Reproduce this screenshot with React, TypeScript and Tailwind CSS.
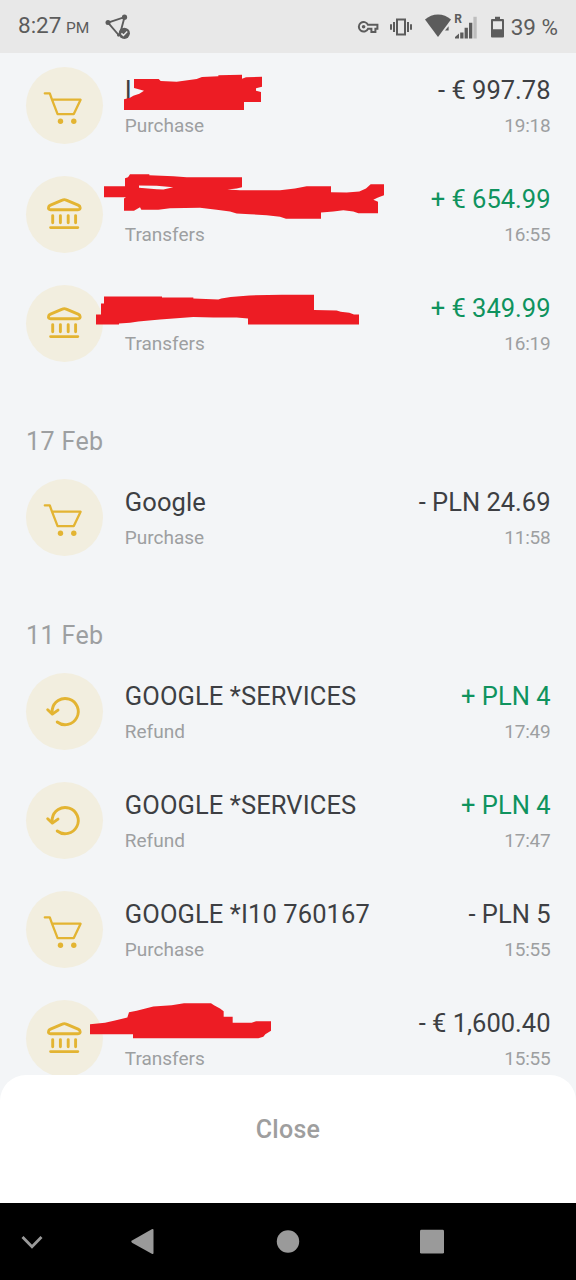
import React from 'react';

type IconKind = 'cart' | 'bank' | 'refund';

interface Transaction {
  icon: IconKind;
  title: string;
  type: string;
  amount: string;
  time: string;
  income?: boolean;
  mask?: { viewBox: string; d: string };
}

interface Group {
  date?: string;
  items: Transaction[];
}

const groups: Group[] = [
  {
    items: [
      {
        icon: 'cart',
        title: 'I',
        type: 'Purchase',
        amount: '- € 997.78',
        time: '19:18',
        mask: {
          viewBox: '0 39 1728 231',
          d: 'M402 75H476L482 81L530 83L590 75L606 69L655 67V64L726 62V74L738 70L786 68V98L768 103V110L783 114V144H732V168H372V136L390 131L400 125L418 119L432 110L416 106L402 102Z',
        },
      },
      {
        icon: 'bank',
        title: '',
        type: 'Transfers',
        amount: '+ € 654.99',
        time: '16:55',
        income: true,
        mask: {
          viewBox: '0 32.4 1728 231',
          d: 'M390 27H448V30L520 33L560 36H726V66L710 70L682 73L720 75H840L885 70L920 63H993V81L1040 82L1078 79L1098 70L1112 57H1152V90L1134 97L1120 104L1134 110V144H1075L1060 139L1030 135L1000 139L963 142V161H858L840 155L800 150L750 147L710 145L690 139L650 134L600 128L510 129L475 134H424L420 126L402 137H372V100L378 96H312V63H375V39L384 36ZM417 61V68L470 72L490 73L520 66L470 62Z',
        },
      },
      {
        icon: 'bank',
        title: '',
        type: 'Transfers',
        amount: '+ € 349.99',
        time: '16:19',
        income: true,
        mask: {
          viewBox: '0 28.8 1728 231',
          d: 'M312 63H486V66H580V69L655 72L664 69L692 65L748 60L846 58H942V104L1010 105L1022 109L1048 112L1062 117H1077V147H744V129L710 126H640L580 125L540 128L480 132L415 138L390 142L357 144V147H288V117H303V84H312Z',
        },
      },
    ],
  },
  {
    date: '17 Feb',
    items: [{ icon: 'cart', title: 'Google', type: 'Purchase', amount: '- PLN 24.69', time: '11:58' }],
  },
  {
    date: '11 Feb',
    items: [
      { icon: 'refund', title: 'GOOGLE *SERVICES', type: 'Refund', amount: '+ PLN 4', time: '17:49', income: true },
      { icon: 'refund', title: 'GOOGLE *SERVICES', type: 'Refund', amount: '+ PLN 4', time: '17:47', income: true },
      { icon: 'cart', title: 'GOOGLE *I10 760167', type: 'Purchase', amount: '- PLN 5', time: '15:55' },
      {
        icon: 'bank',
        title: '',
        type: 'Transfers',
        amount: '- € 1,600.40',
        time: '15:55',
        mask: {
          viewBox: '0 44.4 1728 231',
          d: 'M270 117L315 113L345 106L382 97L387 81L410 77L460 64L515 60L552 54H633L642 60L660 70L671 78V95H698V113H755L768 108H813V137L796 147L790 155L775 159H399V147H270Z',
        },
      },
    ],
  },
];

const icons: Record<IconKind, React.ReactNode> = {
  cart: (
    <>
      <path d="M18.8 26.4h5l2.2 6.3 5.6 14.4h16.2l6.8-14.4H26" strokeWidth="2.3" />
      <circle cx="34.5" cy="54.2" r="2.7" fill="currentColor" stroke="none" />
      <circle cx="47.8" cy="54.2" r="2.7" fill="currentColor" stroke="none" />
    </>
  ),
  bank: (
    <>
      <path d="M24.6 33.7c-1.8 0-2.4-.9-2.1-2.3.2-1.2.8-1.8 2-2.3l11.8-5c1.3-.6 2.7-.6 4 0l11.8 5c1.2.5 1.8 1.1 2 2.3.3 1.4-.3 2.3-2.1 2.3z" />
      <path d="M26.7 39.6v7.2M34.4 39.6v7.2M42.2 39.6v7.2M49.6 39.6v7.2M24.6 51.6h27.2" />
    </>
  ),
  refund: (
    <>
      <path d="M31.2 49a13.1 13.1 0 1 0-5-12.2v3.4" />
      <path d="M21.7 36.8l4.7 4.3 5.6-4" />
    </>
  ),
};

const TransactionIcon = ({ kind }: { kind: IconKind }) => (
  <div className="size-[77px] shrink-0 rounded-full bg-[#f2eedf] text-[#e3b432]">
    <svg
      viewBox="0 0 77 77"
      fill="none"
      stroke="currentColor"
      strokeWidth="2.9"
      strokeLinecap="round"
      strokeLinejoin="round"
      className="size-full"
    >
      {icons[kind]}
    </svg>
  </div>
);

const TransactionRow = ({ item }: { item: Transaction }) => (
  <div className="relative flex h-[108.8px] items-start pr-[25.5px] pl-[25.6px]">
    <TransactionIcon kind={item.icon} />
    <div className="ml-[22.2px] flex flex-1 justify-between pt-1.5">
      <div>
        <p className="h-[35px] text-[25.5px] leading-[35px] tracking-[0.1px] text-[#3d3f43]">{item.title}</p>
        <p className="text-[19px] leading-[35px] text-[#9d9fa1]">{item.type}</p>
      </div>
      <div className="text-right">
        <p
          className={`h-[35px] text-[25.5px] leading-[35px] ${item.income ? 'text-[#0f935e]' : 'text-[#3d3f43]'}`}
        >
          {item.amount}
        </p>
        <p className="text-[19px] leading-[35px] tracking-[-0.2px] text-[#9d9fa1]">{item.time}</p>
      </div>
    </div>
    {item.mask && (
      <svg viewBox={item.mask.viewBox} className="absolute top-0 left-0 h-[77px] w-[576px] overflow-visible">
        <path d={item.mask.d} fill="#ed1c24" fillRule="evenodd" />
      </svg>
    )}
  </div>
);

const StatusBar = () => (
  <header className="flex h-[53px] shrink-0 items-center justify-between bg-[#e8e8e8] pr-[18px] pl-[18px] text-[#5c5c5c]">
    <div className="flex items-center">
      <p className="text-[22.5px] leading-[56px] whitespace-nowrap">
        8:27 <span className="-ml-px text-[15.5px]">PM</span>
      </p>
      <svg viewBox="0 0 28 28" className="ml-[15px] size-7" fill="none" stroke="currentColor" strokeWidth="1.9">
        <path d="M4 9.6L20.5 4.2L16.8 18M4 9.6L15.5 23" />
        <circle cx="4" cy="9.6" r="2.5" fill="currentColor" stroke="none" />
        <circle cx="20.5" cy="4.2" r="2.6" fill="currentColor" stroke="none" />
        <circle cx="14.6" cy="22" r="1.6" fill="currentColor" stroke="none" />
        <circle cx="20.3" cy="20.3" r="5.6" fill="currentColor" stroke="none" />
        <path d="M17.4 20.4l2 2 3.8-3.9" stroke="#e8e8e8" strokeWidth="1.5" />
      </svg>
    </div>
    <div className="flex items-center">
      <svg viewBox="0 0 22 14" className="h-3.5 w-[22px]" fill="none" stroke="currentColor" strokeWidth="2">
        <path d="M11 4.8h9.4v4h-2v3.2h-4V8.8H11A4.8 4.8 0 1 1 11 4.8z" />
        <circle cx="6.6" cy="6.8" r="1.8" fill="currentColor" stroke="none" />
      </svg>
      <svg viewBox="0 0 24 18" className="ml-2.5 h-[18px] w-6" fill="none" stroke="currentColor" strokeWidth="2">
        <rect x="8" y="1.5" width="8" height="15" />
        <path d="M5 4v10M2 6.3v5.4M19 4v10M22 6.3v5.4" />
      </svg>
      <svg viewBox="0 0 54 30" className="ml-3 h-[30px] w-[54px]" fill="currentColor">
        <path d="M0 7.6C7 .7 19 .7 26 7.6L13 25z" />
        <path d="M20 18.6l3.6-4.4v4.4z" />
        <text x="29.3" y="10.5" fontSize="12" fontWeight="700">
          R
        </text>
        <path d="M30 26.5V25l4-3.5v5zM35.2 20.5h3.3v6h-3.3zM39.6 15.8h3.3v10.7h-3.3zM44 10.8h3.3v15.7H44z" />
        <path d="M48.4 4.8h3.3v21.7h-3.3z" opacity=".3" />
      </svg>
      <svg viewBox="0 0 13 22" className="ml-3 h-[22px] w-[13px]" fill="currentColor">
        <path fillRule="evenodd" d="M4 .8h5V3h3q1 0 1 1v16.5q0 1-1 1H1q-1 0-1-1V4q0-1 1-1h3zM2 5.3v8h9v-8z" />
      </svg>
      <p className="ml-[7px] text-[22.5px] leading-[56px] whitespace-nowrap">39 %</p>
    </div>
  </header>
);

const NavigationBar = () => (
  <nav className="h-[77px] shrink-0 bg-black text-[#9a9a9a]">
    <svg viewBox="0 0 576 77" className="block h-[77px] w-full" fill="currentColor">
      <path d="M22.5 34l9.5 9.8L41.5 34" fill="none" stroke="currentColor" strokeWidth="2.8" />
      <path d="M132 37.5L151.8 26.2q1.7-.8 1.7.8v23q0 1.7-1.7.8L132 39.7q-1.6-1.1 0-2.2z" />
      <circle cx="288" cy="38.5" r="11.2" />
      <rect x="420" y="26.8" width="24" height="23.8" rx="1.4" />
    </svg>
  </nav>
);

const App = () => {
  return (
    <div className="flex h-[1280px] w-[576px] flex-col overflow-hidden bg-[#f3f5f7] font-[Roboto,sans-serif]">
      <StatusBar />
      <main className="min-h-0 flex-1 overflow-hidden pt-3.5">
        {groups.map((group, index) => (
          <section key={index}>
            {group.date && (
              <h2 className="h-[85.6px] pt-[30.4px] pl-[26px] text-[25px] leading-[36px] tracking-[0.4px] text-[#9d9fa1]">
                {group.date}
              </h2>
            )}
            {group.items.map((item, i) => (
              <TransactionRow key={i} item={item} />
            ))}
          </section>
        ))}
      </main>
      <footer className="shrink-0 bg-[#f3f5f7]">
        <button className="block h-32 w-full rounded-t-[26px] bg-white pb-[19px] text-[25px] font-medium tracking-[0.3px] text-[#9e9e9e]">
          Close
        </button>
      </footer>
      <NavigationBar />
    </div>
  );
};

export default App;
